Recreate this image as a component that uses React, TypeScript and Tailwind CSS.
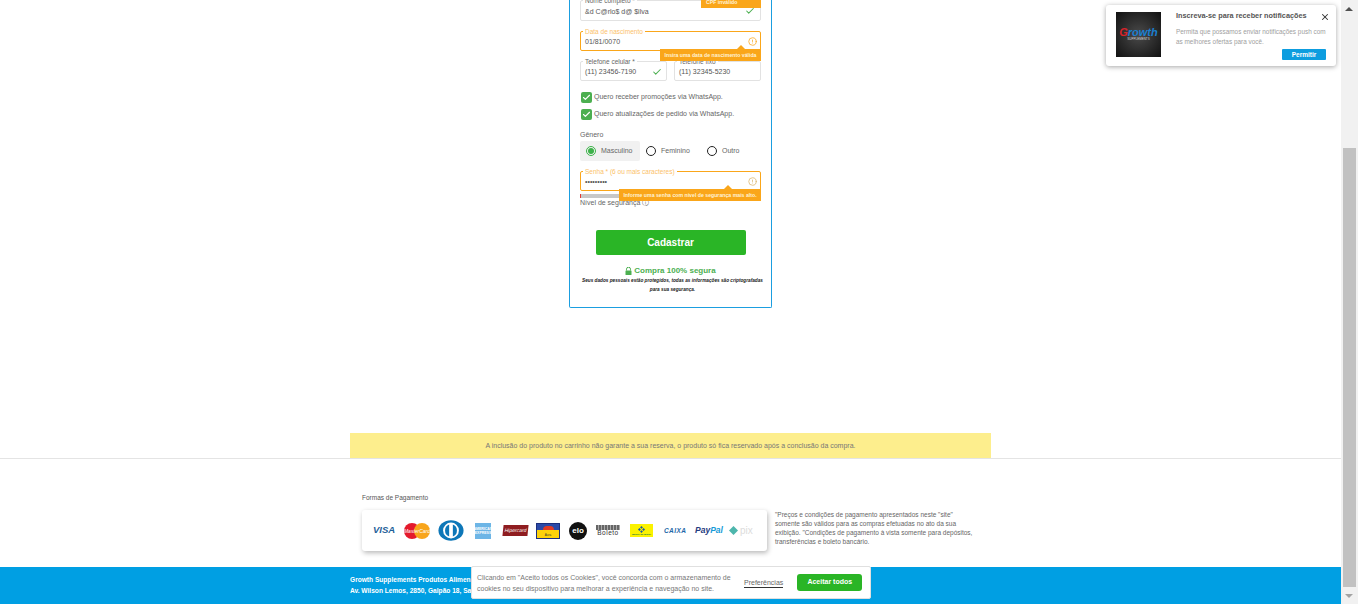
import { Check, X, CircleAlert } from "lucide-react";

const Field = ({ label, value, className, color, labelClass, valueClass, children }: any) => (
  <div className={`relative h-[20px] rounded-[2px] border ${color ?? "border-[#e2e2e2]"} ${className ?? ""}`}>
    <span className={`absolute -top-[5px] left-[2px] bg-white px-[2px] text-[6.5px] leading-[9px] whitespace-nowrap ${labelClass ?? "text-[#666]"}`}>
      {label}
    </span>
    <span className={`absolute left-[4px] text-[7px] leading-[10px] text-[#555] whitespace-nowrap ${valueClass ?? "top-[5px]"}`}>{value}</span>
    {children}
  </div>
);

const Warn = ({ text, className }: { text: string; className: string }) => (
  <div className={`absolute z-10 h-[12px] bg-[#faa61a] text-[5.2px] leading-[12px] font-bold text-[#fff3d6] whitespace-nowrap ${className}`}>
    {text}
  </div>
);

const Arrow = ({ className }: { className: string }) => (
  <span className={`absolute z-10 h-0 w-0 border-x-[4px] border-b-[4px] border-x-transparent border-b-[#faa61a] ${className}`} />
);

const CheckBox = ({ text }: { text: string }) => (
  <div className="flex h-[14px] items-center gap-[2px] pl-[1px]">
    <span className="flex h-[11px] w-[11px] items-center justify-center rounded-[2px] bg-[#4caf50]">
      <Check size={9} strokeWidth={3} className="text-white" />
    </span>
    <span className="text-[7px] text-[#666]">{text}</span>
  </div>
);

const Radio = ({ text, on }: { text: string; on?: boolean }) => (
  <div className={`flex h-[20px] items-center gap-[5px] rounded-[2px] pl-[6px] ${on ? "w-[60px] bg-[#f1f1f1]" : ""}`}>
    {on ? (
      <span className="flex h-[10px] w-[10px] items-center justify-center rounded-full border border-[#3db24a]">
        <span className="h-[6px] w-[6px] rounded-full bg-[#3db24a]" />
      </span>
    ) : (
      <span className="h-[10px] w-[10px] rounded-full border border-[#222]" />
    )}
    <span className="text-[7px] text-[#666]">{text}</span>
  </div>
);

const RegisterForm = () => (
  <div className="relative mx-auto h-[308px] w-[203px] rounded-b-[2px] border-x border-b border-[#1b9ee0] bg-white">
    <div className="px-[10px]">
      <div className="relative">
        <Field label="Nome completo *" value="&d C@rlo$ d@ $ilva" className="h-[21px]" valueClass="top-[6px]">
          <Check size={10} strokeWidth={2.5} className="absolute right-[5px] top-[5px] text-[#4caf50]" />
        </Field>
        <Warn text="CPF inválido" className="right-0 -top-[4px] w-[60px] pl-[5px]" />
      </div>

      <div className="relative mt-[10px]">
        <Field label="Data de nascimento" value="01/81/0070" color="border-[#faa61a]" labelClass="text-[#fbbf6a]">
          <CircleAlert size={9} className="absolute right-[3px] top-[5px] text-[#faa61a]" />
        </Field>
        <Arrow className="right-[16px] top-[14px]" />
        <Warn text="Insira uma data de nascimento válida" className="right-0 top-[18px] w-[101px] text-center" />
      </div>

      <div className="mt-[10px] flex justify-between">
        <Field label="Telefone celular *" value="(11) 23456-7190" className="w-[87px]">
          <Check size={10} strokeWidth={2.5} className="absolute right-[4px] top-[5px] text-[#4caf50]" />
        </Field>
        <Field label="Telefone fixo" value="(11) 32345-5230" className="w-[87px]" />
      </div>

      <div className="mt-[9px] flex flex-col gap-[3px]">
        <CheckBox text="Quero receber promoções via WhatsApp." />
        <CheckBox text="Quero atualizações de pedido via WhatsApp." />
      </div>

      <p className="mt-[9px] text-[7px] leading-[10px] text-[#666]">Gênero</p>
      <div className="mt-[1px] flex">
        <Radio text="Masculino" on />
        <div className="w-[61px]"><Radio text="Feminino" /></div>
        <Radio text="Outro" />
      </div>

      <div className="relative mt-[10px]">
        <Field label="Senha * (6 ou mais caracteres)" value="•••••••••" color="border-[#faa61a]" labelClass="text-[#fbbf6a]">
          <CircleAlert size={9} className="absolute right-[3px] top-[5px] text-[#d9b36a]" />
        </Field>
        <Arrow className="right-[29px] top-[14px]" />
        <Warn text="Informe uma senha com nível de segurança mais alto." className="right-0 top-[18px] w-[142px] text-center" />
      </div>
      <div className="mt-[3px] flex h-[4px] w-[120px] bg-[#c8c8c8]">
        <span className="h-full w-[1px] bg-[#e53935]" />
      </div>
      <p className="text-[7px] leading-[10px] text-[#666]">Nível de segurança ⓘ</p>

      <button className="mx-auto mt-[22px] block h-[25px] w-[150px] rounded-[2px] bg-[#2ab526] text-[10px] font-bold text-white">
        Cadastrar
      </button>

      <div className="mt-[11px] flex h-[10px] items-center justify-center gap-[2px] text-[8px] font-bold text-[#4caf50]">
        <svg width="7" height="8" viewBox="0 0 7 8">
          <path d="M1.5 3.5V2.2a2 2 0 0 1 4 0v1.3" fill="none" stroke="#4caf50" />
          <rect x="0.5" y="3.5" width="6" height="4.5" rx="0.5" fill="#4caf50" />
        </svg>
        Compra 100% segura
      </div>
      <p className="mx-auto w-[185px] text-center text-[4.7px] font-bold italic leading-[9px] text-[#222]">
        Seus dados pessoais estão protegidos, todas as informações são criptografadas para sua segurança.
      </p>
    </div>
  </div>
);

const Diners = () => (
  <svg width="26" height="21" viewBox="0 0 28 22">
    <ellipse cx="14" cy="11" rx="13.5" ry="11" fill="#0d77b8" />
    <circle cx="14" cy="11" r="8.5" fill="#fff" />
    <path d="M12 4.5a7 7 0 0 0 0 13zM16 4.5a7 7 0 0 1 0 13z" fill="#0d77b8" />
  </svg>
);

const PaymentIcons = () => (
  <div className="flex h-[41px] w-[405px] shrink-0 items-center rounded-[3px] bg-white pl-[11px] shadow-[1px_2px_5px_rgba(0,0,0,0.28)]">
    <span className="w-[31px] text-[9.5px] font-bold italic text-[#1f5f99]">VISA</span>
    <svg width="26" height="16" viewBox="0 0 26 16">
      <circle cx="8" cy="8" r="8" fill="#e4192c" />
      <circle cx="18" cy="8" r="8" fill="#f8a51b" />
      <text x="13" y="10" textAnchor="middle" fontSize="5" fontStyle="italic" fill="#fff" fontFamily="Liberation Sans">MasterCard</text>
    </svg>
    <span className="ml-[8px] flex"><Diners /></span>
    <span className="ml-[11px] flex h-[16px] w-[16px] items-center justify-center bg-[#6db5e6] text-center text-[3.5px] font-bold leading-[4px] text-white">AMERICAN<br />EXPRESS</span>
    <span className="ml-[12px] flex h-[11px] w-[25px] -skew-x-6 items-center justify-center bg-[#8f1d20] text-[5px] italic text-white">Hipercard</span>
    <span className="ml-[8px] flex h-[16px] w-[24px] flex-col items-center border border-[#1b2f7d] bg-[#2a4aa8]">
      <span className="mt-[2px] h-[4px] w-[11px] rounded-t-full bg-[#e23b23]" />
      <span className="flex h-[8px] w-full items-end justify-center bg-[#fdd20a] text-[3px] text-[#333]">Aura</span>
    </span>
    <span className="ml-[9px] flex h-[18px] w-[18px] items-center justify-center rounded-full bg-[#111] text-[8px] font-bold text-white">elo</span>
    <span className="ml-[9px] flex h-[11px] w-[24px] flex-col items-center overflow-hidden">
      <span className="h-[5px] w-full shrink-0 bg-[repeating-linear-gradient(90deg,#666_0,#666_2px,#aaa_2px,#aaa_3px)]" />
      <span className="text-[6.5px] leading-[6px] tracking-[0.5px] text-[#333]">Boleto</span>
    </span>
    <span className="ml-[10px] flex h-[13px] w-[23px] flex-col items-center justify-center bg-[#fbf200]">
      <svg width="7" height="7" viewBox="0 0 10 10">
        <path d="M5 0l2 2-2 2-2-2zM2 3l2 2-2 2-2-2zM8 3l2 2-2 2-2-2zM5 6l2 2-2 2-2-2z" fill="#1c5b9e" />
      </svg>
      <span className="text-[2.5px] leading-[3px] font-bold text-[#2a7a3b]">Banco do Brasil</span>
    </span>
    <span className="ml-[11px] w-[21px] text-[6.5px] font-bold italic tracking-[0.4px] text-[#1d67a8]">CAIXA</span>
    <span className="ml-[10px] w-[27px] text-[8.5px] font-bold italic"><span className="text-[#253b80]">Pay</span><span className="text-[#179bd7]">Pal</span></span>
    <svg width="9" height="9" viewBox="0 0 10 10" className="ml-[7px]">
      <path d="M5 0l5 5-5 5-5-5z" fill="#4db6ac" />
    </svg>
    <span className="ml-[2px] text-[10px] leading-[10px] text-[#dcdcdc]">pix</span>
  </div>
);

const PushPrompt = () => (
  <div className="absolute right-[5px] top-[5px] z-20 h-[61px] w-[230px] rounded-[3px] bg-white shadow-[0_1px_5px_rgba(0,0,0,0.35)]">
    <div className="absolute left-[10px] top-[7px] flex h-[45px] w-[45px] flex-col items-center justify-center bg-[radial-gradient(circle,#4a4a4a,#111)]">
      <span className="text-[11px] font-bold italic leading-[9px]"><span className="text-[#d8232a]">G</span><span className="text-[#1a7fd0]">rowth</span></span>
      <span className="text-[3px] leading-[4px] text-[#ddd]">SUPPLEMENTS</span>
    </div>
    <p className="absolute left-[70px] top-[6px] text-[7.3px] leading-[10px] font-bold text-[#555] whitespace-nowrap">Inscreva-se para receber notificações</p>
    <X size={10} strokeWidth={2.5} className="absolute right-[6px] top-[7px] text-[#333]" />
    <p className="absolute left-[70px] top-[22px] w-[156px] text-[6.4px] leading-[10px] text-[#a0a0a0]">Permita que possamos enviar notificações push com as melhores ofertas para você.</p>
    <button className="absolute right-[10px] top-[44px] h-[11px] w-[44px] rounded-[1px] bg-[#0d9ddf] text-[6.5px] leading-[11px] font-bold text-white">Permitir</button>
  </div>
);

export default function App() {
  return (
    <div className="relative flex h-[604px] w-[1358px] overflow-hidden bg-white font-['Liberation_Sans',Arial,sans-serif]">
      <main className="relative w-[1341px]">
        <RegisterForm />

        <div className="mx-auto mt-[125px] h-[25px] w-[641px] bg-[#fdee8d] text-center text-[7px] leading-[25px] text-[#777]">
          A inclusão do produto no carrinho não garante a sua reserva, o produto só fica reservado após a conclusão da compra.
        </div>
        <div className="h-[1px] bg-[#e4e4e4]" />

        <div className="mx-auto w-[641px] pl-[12px]">
          <p className="mt-[34px] text-[6.5px] leading-[9px] text-[#555]">Formas de Pagamento</p>
          <div className="mt-[8px] flex items-start">
            <PaymentIcons />
            <p className="ml-[8px] w-[200px] text-[6.5px] leading-[9px] text-[#666]">
              "Preços e condições de pagamento apresentados neste "site" somente são válidos para as compras efetuadas no ato da sua exibição. "Condições de pagamento à vista somente para depósitos, transferências e boleto bancário.
            </p>
          </div>
        </div>

        <footer className="absolute inset-x-0 bottom-0 h-[37px] bg-[#009fe3] pl-[350px] pt-[7px] text-[6.6px] font-bold leading-[11px] text-white">
          <p>Growth Supplements Produtos Alimentícios</p>
          <p>Av. Wilson Lemos, 2850, Galpão 18, Santa Catarina</p>
        </footer>

        <div className="absolute left-[471px] top-[566px] z-20 flex h-[33px] w-[400px] items-center rounded-[2px] border border-[#e0e0e0] bg-white pl-[5px]">
          <p className="w-[258px] text-[7px] leading-[11px] text-[#777]">
            Clicando em "Aceito todos os Cookies", você concorda com o armazenamento de cookies no seu dispositivo para melhorar a experiência e navegação no site.
          </p>
          <span className="ml-[9px] border-b border-[#333] text-[7px] leading-[9px] text-[#666]">Preferências</span>
          <button className="ml-[14px] h-[17px] w-[65px] rounded-[3px] bg-[#2ab526] text-[7px] font-bold text-white">Aceitar todos</button>
        </div>

        <PushPrompt />
      </main>

      <div className="relative w-[17px] bg-[#f1f1f1]">
        <span className="absolute left-[4px] top-[7px] h-0 w-0 border-x-[4px] border-b-[4px] border-x-transparent border-b-[#505050]" />
        <div className="absolute left-[2px] right-[2px] top-[148px] h-[439px] bg-[#c1c1c1]" />
        <span className="absolute left-[4px] bottom-[6px] h-0 w-0 border-x-[4px] border-t-[4px] border-x-transparent border-t-[#a3a3a3]" />
      </div>
    </div>
  );
}
